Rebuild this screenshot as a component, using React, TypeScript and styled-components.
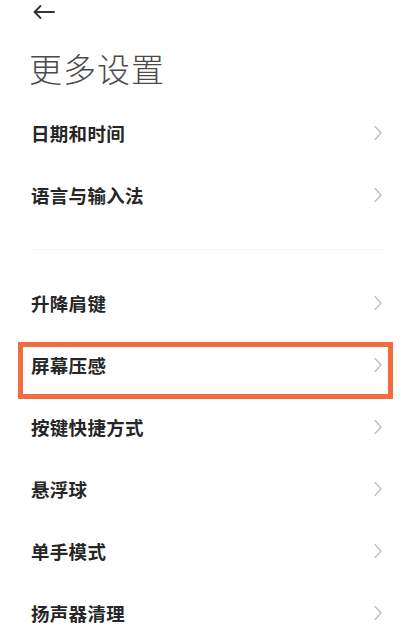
import { createGlobalStyle } from "styled-components";
import styled from "styled-components";

const GlobalStyle = createGlobalStyle`
  html, body {
    margin: 0;
    padding: 0;
    background: #ffffff;
  }

  body {
    font-family: "Noto Sans CJK SC", "Noto Sans", sans-serif;
    -webkit-font-smoothing: antialiased;
  }
`;

const Page = styled.div`
  width: 404px;
  height: 630px;
  overflow: hidden;
  background: #ffffff;
`;

const TopBar = styled.div`
  height: 24px;
  display: flex;
  align-items: center;
  padding-left: 32px;
  color: #333333;
`;

const Title = styled.h1`
  margin: 24px 0 0;
  padding-left: 29px;
  height: 40px;
  line-height: 40px;
  font-size: 33px;
  font-weight: 300;
  color: #4a4a4a;
  letter-spacing: 1px;
`;

const List = styled.div`
  margin-top: 14px;
  display: flex;
  flex-direction: column;
`;

const Row = styled.div<{ $highlighted?: boolean }>`
  position: relative;
  height: 62px;
  display: flex;
  align-items: center;
  justify-content: space-between;
  padding: 0 21px 0 31px;

  ${({ $highlighted }) =>
    $highlighted &&
    `
    &::after {
      content: "";
      position: absolute;
      top: 8px;
      bottom: -3px;
      left: 18px;
      right: 11px;
      border: 5px solid #f26d3d;
      pointer-events: none;
    }
  `}
`;

const Label = styled.span`
  font-size: 18.5px;
  font-weight: 700;
  color: #262626;
  letter-spacing: 0.3px;
`;

const Divider = styled.div`
  height: 46px;
  display: flex;
  align-items: center;
  padding: 0 21px 0 30px;

  &::before {
    content: "";
    flex: 1;
    height: 1px;
    background: #f4f6f6;
  }
`;

const BackArrow = () => (
  <svg width="24" height="16" viewBox="0 0 24 16" fill="none">
    <path
      d="M22 8H2.5M8.5 2L2.5 8l6 6"
      stroke="currentColor"
      strokeWidth="1.8"
      strokeLinecap="round"
      strokeLinejoin="round"
    />
  </svg>
);

const Chevron = () => (
  <svg width="10" height="16" viewBox="0 0 10 16" fill="none">
    <path
      d="M2 1.5L8 8l-6 6.5"
      stroke="#bfbfbf"
      strokeWidth="1.4"
      strokeLinecap="round"
      strokeLinejoin="round"
    />
  </svg>
);

const firstGroup = ["日期和时间", "语言与输入法"];
const secondGroup = [
  "升降肩键",
  "屏幕压感",
  "按键快捷方式",
  "悬浮球",
  "单手模式",
  "扬声器清理",
];

export default function App() {
  return (
    <Page>
      <GlobalStyle />
      <TopBar>
        <BackArrow />
      </TopBar>
      <Title>更多设置</Title>
      <List>
        {firstGroup.map((label) => (
          <Row key={label}>
            <Label>{label}</Label>
            <Chevron />
          </Row>
        ))}
        <Divider />
        {secondGroup.map((label) => (
          <Row key={label} $highlighted={label === "屏幕压感"}>
            <Label>{label}</Label>
            <Chevron />
          </Row>
        ))}
      </List>
    </Page>
  );
}
